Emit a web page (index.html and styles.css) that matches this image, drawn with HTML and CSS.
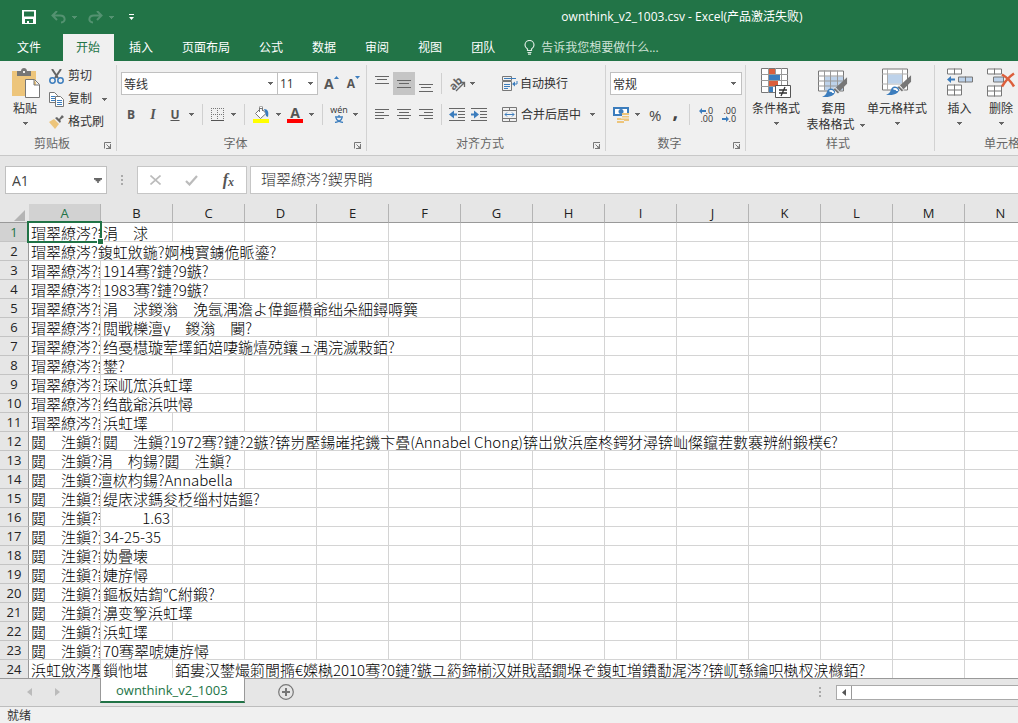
FILE: index.html
```html
<!DOCTYPE html>
<html lang="zh-CN">
<head>
<meta charset="utf-8">
<title>ownthink_v2_1003.csv - Excel</title>
<link rel="stylesheet" href="styles.css">
</head>
<body>
<svg class="defs" aria-hidden="true">
  <symbol id="caret" viewBox="0 0 5 3"><path d="M0 0h5v1h-1v1h-1v1h-1v-1h-1v-1h-1z" fill="currentColor"/></symbol>
  <symbol id="launch" viewBox="0 0 8 8"><path d="M.5 6.500V.5H7M2.500 2.500l3 3" fill="none" stroke="#777"/><path d="M7 3v4H3z" fill="#777"/><path d="M6 2h1v5H2v-1h4z" fill="#777"/></symbol>
  <symbol id="brush" viewBox="0 0 28 22"><path d="M27 0v7l-8 8-4-4z" fill="#777"/><path d="M14 11l5 5-2 2-5-5z" fill="#777" stroke="#f0f0f0"/><path d="M0 21c4-1 5-4 6-7 2-3 7-2 8 1 0 4-4 7-14 6z" fill="#3c7dbd"/><path d="M8 15c2-1 4 0 4 2" stroke="#fff" stroke-width="2" fill="none"/></symbol>
</svg>

<header class="titlebar">
  <div class="quick">
    <button class="plain" aria-label="保存"><svg width="14" height="14" viewBox="0 0 14 14"><path fill="#fff" fill-rule="evenodd" d="M0 0h14v14H0zM2 1.500v5h10v-5zM3 9v4h2v-2h2v2h4V9z"/></svg></button>
    <button class="plain dim undo" aria-label="撤消"><svg width="15" height="13" viewBox="0 0 15 13" fill="none" stroke="currentColor" stroke-width="2"><path d="M6 0L1.500 4.500 6 9M2 4.500h7c6 0 6 7 1 7"/></svg><svg class="caret"><use href="#caret"/></svg></button>
    <button class="plain dim redo" aria-label="恢复"><svg width="15" height="13" viewBox="0 0 15 13" fill="none" stroke="currentColor" stroke-width="2"><path d="M9 0l4.500 4.500L9 9M13 4.500H6c-6 0-6 7-1 7"/></svg><svg class="caret"><use href="#caret"/></svg></button>
    <button class="plain more" aria-label="自定义快速访问工具栏"><svg width="5" height="6" viewBox="0 0 5 6"><path fill="#fff" d="M0 0h5v1H0zM0 3h5L2.500 6z"/></svg></button>
  </div>
  <h1 class="title">ownthink_v2_1003.csv - Excel(产品激活失败)</h1>
</header>

<nav class="tabs">
  <button class="tab file">文件</button>
  <button class="tab active">开始</button>
  <button class="tab">插入</button>
  <button class="tab">页面布局</button>
  <button class="tab">公式</button>
  <button class="tab">数据</button>
  <button class="tab">审阅</button>
  <button class="tab">视图</button>
  <button class="tab">团队</button>
  <button class="tell"><svg width="11" height="15" viewBox="0 0 11 15" fill="none" stroke="#dcebe2" stroke-width="1.200"><path d="M3.500 10.500V9C2 8 1 6.700 1 5a4.500 4.500 0 0 1 9 0c0 1.700-1 3-2.500 4v1.500zM3.500 12.500h4M4 14.200h3"/></svg>告诉我您想要做什么...</button>
</nav>

<section class="ribbon">
  <div class="group clip">
    <div class="body">
      <button class="big paste"><svg width="29" height="31" viewBox="0 0 29 31"><path fill="#edc57b" d="M1 3h24v25H1z"/><path fill="#777" d="M6 3h4c0-4 6-4 6 0h4v5H6z"/><path fill="#f0f0f0" d="M12 3h2v2h-2z"/><path d="M14.500 11.500h9l5 5v13h-14zM23 12v5h5" fill="#fff" stroke="#777"/></svg><span>粘贴</span><svg class="caret"><use href="#caret"/></svg></button>
      <div class="stack">
        <button class="small"><svg width="15" height="15" viewBox="0 0 15 15"><path d="M3 0l6 9M12 0L6 9" stroke="#666" stroke-width="2"/><circle cx="3.500" cy="11.500" r="2.700" fill="none" stroke="#3c7dbd" stroke-width="1.500"/><circle cx="11.500" cy="11.500" r="2.700" fill="none" stroke="#3c7dbd" stroke-width="1.500"/></svg>剪切</button>
        <button class="small"><svg width="15" height="15" viewBox="0 0 15 15"><path d="M.5.5h5l3 3v7h-8z" fill="#fff" stroke="#777"/><path d="M2 4.500h4M2 6.500h4M2 8.500h4" stroke="#3c7dbd"/><path d="M6.500 4.500h5l3 3v7h-8z" fill="#fff" stroke="#777"/><path d="M8 8.500h5M8 10.500h5M8 12.500h5" stroke="#3c7dbd"/></svg>复制<svg class="caret far"><use href="#caret"/></svg></button>
        <button class="small"><svg width="15" height="15" viewBox="0 0 15 15"><path d="M0 7l5-3 5 5-4 5z" fill="#edc57b"/><path d="M6 3l5 5 1-2-1-1 4-3-2-2-3 4-2-2z" fill="#666"/></svg>格式刷</button>
      </div>
    </div>
    <div class="caption"><span>剪贴板</span><svg class="launch"><use href="#launch"/></svg></div>
  </div>

  <div class="group font">
    <div class="body rows">
      <div class="row">
        <div class="combo name"><input aria-label="字体" value="等线"><svg class="caret"><use href="#caret"/></svg></div>
        <div class="combo size"><input aria-label="字号" value="11"><svg class="caret"><use href="#caret"/></svg></div>
        <button class="plain grow" aria-label="增大字号"><b>A</b><svg width="5" height="3" viewBox="0 0 5 3"><path d="M0 3h5L2.500 0z" fill="#3c7dbd"/></svg></button>
        <button class="plain shrink" aria-label="减小字号"><b>A</b><svg width="5" height="3" viewBox="0 0 5 3"><path d="M0 0h5L2.500 3z" fill="#3c7dbd"/></svg></button>
      </div>
      <div class="row second">
        <button class="plain letter"><b>B</b></button>
        <button class="plain letter"><b class="serif"><i>I</i></b></button>
        <button class="plain letter"><b><u>U</u></b></button>
        <svg class="caret"><use href="#caret"/></svg>
        <span class="sep"></span>
        <button class="plain" aria-label="边框"><svg width="14" height="14" viewBox="0 0 14 14"><path d="M.5 0v12M6.500 0v12M12.500 0v12M0 .5h13M0 6.500h13" stroke="#777" stroke-dasharray="1 1"/><path d="M0 12.500h13" stroke="#555"/></svg></button>
        <svg class="caret"><use href="#caret"/></svg>
        <span class="sep"></span>
        <button class="plain" aria-label="填充颜色"><svg width="17" height="17" viewBox="0 0 17 17"><path d="M2.500 7.500L8 2l5 5.500-5.500 5zM6.500 6V1.500c0-2 3-2 3 0V5" fill="#fff" stroke="#777"/><path d="M11 3c4 0 5 3 4 8l-2-1-.5-3z" fill="#3c7dbd"/><path fill="#ff0" d="M0 13h16v4H0z"/></svg></button>
        <svg class="caret"><use href="#caret"/></svg>
        <button class="plain color" aria-label="字体颜色"><b>A</b></button>
        <svg class="caret"><use href="#caret"/></svg>
        <span class="sep"></span>
        <button class="plain pinyin" aria-label="拼音"><span>wén</span><svg width="10" height="8" viewBox="0 0 10 8" fill="none" stroke="#3c7dbd" stroke-width="1.300"><path d="M1 2h8M5 0v2M2 3c1 3 4 4 7 4.500M8 3c-1 3-4 4-7 4.500"/></svg></button>
        <svg class="caret"><use href="#caret"/></svg>
      </div>
    </div>
    <div class="caption"><span>字体</span><svg class="launch"><use href="#launch"/></svg></div>
  </div>

  <div class="group align">
    <div class="body rows">
      <div class="row">
        <button class="cell top" aria-label="顶端对齐"><svg width="14" height="8" viewBox="0 0 14 8" stroke="#666"><path d="M0 .5h14M2 3.500h10M0 7.500h14"/></svg></button>
        <button class="cell pressed" aria-label="垂直居中"><svg width="14" height="8" viewBox="0 0 14 8" stroke="#666"><path d="M0 .5h14M2 3.500h10M0 7.500h14"/></svg></button>
        <button class="cell bottom" aria-label="底端对齐"><svg width="14" height="8" viewBox="0 0 14 8" stroke="#666"><path d="M0 .5h14M2 3.500h10M0 7.500h14"/></svg></button>
        <span class="sep"></span>
        <button class="plain" aria-label="方向"><svg width="17" height="16" viewBox="0 0 17 16"><text x="0" y="12" transform="rotate(-45 6 8)" class="ab">ab</text><path d="M7 15l8-8M11 6.500h4.500V11" fill="none" stroke="#666" stroke-width="1.300"/></svg></button>
        <svg class="caret"><use href="#caret"/></svg>
        <button class="small wrap"><svg width="16" height="16" viewBox="0 0 16 16" fill="none" stroke="#777"><path d="M.5.5h9v4h-9zM.5 5.500h9v9h-9z"/><path d="M2 2.500h12M2 8.500h6M2 10.500h6M2 12.500h4M15 5v3h-4" stroke="#3c7dbd"/><path d="M13 5.500L10 8l3 2.500z" fill="#3c7dbd" stroke="none"/></svg>自动换行</button>
      </div>
      <div class="row second">
        <button class="cell" aria-label="左对齐"><svg width="14" height="11" viewBox="0 0 14 11" stroke="#666"><path d="M0 .5h14M0 3.500h9M0 6.500h14M0 9.500h9"/></svg></button>
        <button class="cell" aria-label="居中"><svg width="14" height="11" viewBox="0 0 14 11" stroke="#666"><path d="M0 .5h14M2 3.500h10M0 6.500h14M2 9.500h10"/></svg></button>
        <button class="cell" aria-label="右对齐"><svg width="14" height="11" viewBox="0 0 14 11" stroke="#666"><path d="M0 .5h14M5 3.500h9M0 6.500h14M5 9.500h9"/></svg></button>
        <span class="sep"></span>
        <button class="cell" aria-label="减少缩进量"><svg width="16" height="13" viewBox="0 0 16 13" stroke="#666"><path d="M0 .5h16M9 3.500h7M9 6.500h7M9 9.500h7M0 12.500h16"/><path d="M5 2.500L0 6.500l5 4v-3h3v-2H5z" fill="#3c7dbd" stroke="none"/></svg></button>
        <button class="cell" aria-label="增加缩进量"><svg width="16" height="13" viewBox="0 0 16 13" stroke="#666"><path d="M0 .5h16M9 3.500h7M9 6.500h7M9 9.500h7M0 12.500h16"/><path d="M3 2.500l5 4-5 4v-3H0v-2h3z" fill="#3c7dbd" stroke="none"/></svg></button>
        <button class="small merge"><svg width="15" height="15" viewBox="0 0 15 15" fill="none" stroke="#777"><path d="M.5.5h14v14H.5zM0 3.500h15M0 11.500h15M7.500 0v3M7.500 12v3"/><path d="M3 7.500h9M5 5.500l-2 2 2 2M10 5.500l2 2-2 2" stroke="#3c7dbd"/></svg>合并后居中</button>
        <svg class="caret apart"><use href="#caret"/></svg>
      </div>
    </div>
    <div class="caption"><span>对齐方式</span><svg class="launch"><use href="#launch"/></svg></div>
  </div>

  <div class="group number">
    <div class="body rows">
      <div class="row">
        <div class="combo format"><input aria-label="数字格式" value="常规"><svg class="caret"><use href="#caret"/></svg></div>
      </div>
      <div class="row second">
        <button class="plain" aria-label="会计数字格式"><svg width="16" height="16" viewBox="0 0 16 16"><path d="M0 0h16v9H0z" fill="#3c7dbd"/><path d="M2 2h12v5H2z" fill="#fff"/><circle cx="8" cy="4.500" r="2.500" fill="#3c7dbd"/><path d="M9 6h7v8H9zM4 11h7v5H4z" fill="#edc57b"/><path d="M9 8.500h7M8 11h8M4 13.500h7" stroke="#f0f0f0"/></svg></button>
        <svg class="caret"><use href="#caret"/></svg>
        <button class="plain pct">%</button>
        <button class="plain comma">,</button>
        <span class="sep"></span>
        <button class="plain dec" aria-label="增加小数位数"><span><svg width="7" height="6" viewBox="0 0 7 6"><path d="M3 0L0 3l3 3V4h4V2H3z" fill="#3c7dbd"/></svg>.0</span><span>.00</span></button>
        <button class="plain dec" aria-label="减少小数位数"><span>.00</span><span><svg width="7" height="6" viewBox="0 0 7 6"><path d="M4 0l3 3-3 3V4H0V2h4z" fill="#3c7dbd"/></svg>.0</span></button>
      </div>
    </div>
    <div class="caption"><span>数字</span><svg class="launch"><use href="#launch"/></svg></div>
  </div>

  <div class="group styles">
    <div class="body">
      <button class="big"><svg width="31" height="31" viewBox="0 0 31 31"><path d="M.5.5h26v24H.5z" fill="#fff" stroke="#777"/><path d="M7.500 0v25M14.500 0v25M20.500 0v25M0 6.500h27M0 12.500h27M0 18.500h27" stroke="#999"/><path d="M8 1h6v5H8zM8 13h9v5H8z" fill="#dc5f3c"/><path d="M8 7h11v5H8zM8 19h4v5H8z" fill="#3c7dbd"/><path d="M14.500 17.500h15v12h-15z" fill="#fff" stroke="#555"/><path d="M18 22h8M18 25h8M24 19l-4 9" stroke="#333" stroke-width="1.300"/></svg><span>条件格式</span><svg class="caret"><use href="#caret"/></svg></button>
      <button class="big two"><svg width="31" height="30" viewBox="0 0 31 30"><path d="M.5 2.500h25v20H.5z" fill="#fff"/><path d="M7 8h18v14H7z" fill="#bdd2ea"/><path d="M.5 2.500h25v20H.5z" fill="none" stroke="#777"/><path d="M6.500 2v20M12.500 2v20M19.500 2v20M0 7.500h26M0 12.500h26M0 17.500h26" stroke="#999"/><use href="#brush" x="4" y="8" width="26" height="22"/></svg><span>套用</span><span>表格格式<svg class="caret"><use href="#caret"/></svg></span></button>
      <button class="big"><svg width="31" height="30" viewBox="0 0 31 30"><path d="M.5.5h25v21H.5z" fill="#fff" stroke="#777"/><path d="M5.500 0v22M20.500 0v22M0 5.500h26M0 15.500h26" stroke="#aaa"/><path d="M6 6h14v9H6z" fill="#bdd2ea"/><use href="#brush" x="4" y="6" width="26" height="22"/></svg><span>单元格样式</span><svg class="caret"><use href="#caret"/></svg></button>
    </div>
    <div class="caption"><span>样式</span></div>
  </div>

  <div class="group cells">
    <div class="body">
      <button class="big"><svg width="27" height="30" viewBox="0 0 27 30"><path d="M1.500.5h14v5h-14zM8.500 0v6M1.500 16.500h14v10h-14zM8.500 16v11M1 21.500h15" fill="#fff" stroke="#777"/><path d="M12.500 8.500h14v5h-14zM19.500 8v6" fill="#bdd2ea" stroke="#777"/><path d="M5 7.500L1 11l4 3.500V12h4v-2H5z" fill="#3c7dbd"/></svg><span>插入</span><svg class="caret"><use href="#caret"/></svg></button>
      <button class="big"><svg width="30" height="30" viewBox="0 0 30 30"><path d="M1.500.5h14v5h-14zM8.500 0v6M1.500 17.500h14v10h-14zM8.500 17v11M1 22.500h15" fill="#fff" stroke="#777"/><path d="M7.500 8.500h10v5h-10z" fill="#bdd2ea" stroke="#777"/><path d="M16 6c5 3 9 7 12 12M28 5c-6 4-9 8-12 13" stroke="#dc5f3c" stroke-width="2.500" fill="none"/></svg><span>删除</span><svg class="caret"><use href="#caret"/></svg></button>
    </div>
    <div class="caption"><span>单元格</span></div>
  </div>
</section>

<section class="formula">
  <div class="combo ref"><input aria-label="名称框" value="A1"><svg class="caret"><use href="#caret"/></svg></div>
  <span class="grip"></span>
  <div class="fx">
    <button class="plain" aria-label="取消"><svg width="11" height="10" viewBox="0 0 11 10" stroke="#bbb" stroke-width="1.600"><path d="M.5.5l10 9M10.500.5l-10 9"/></svg></button>
    <button class="plain" aria-label="输入"><svg width="13" height="11" viewBox="0 0 13 11" fill="none" stroke="#bbb" stroke-width="2.200"><path d="M1 6l3.500 3.500L12 1"/></svg></button>
    <button class="plain func"><i>f</i><small>x</small></button>
  </div>
  <input class="entry" aria-label="编辑栏" value="瑁翠繚涔?鍥界睄">
</section>

<main class="sheet">
  <table>
    <colgroup id="cols"></colgroup>
    <thead><tr id="head"></tr></thead>
    <tbody id="rows"></tbody>
  </table>
</main>

<footer>
  <div class="sheetbar">
    <div class="arrows"><button class="plain" aria-label="上一个"><svg width="5" height="8" viewBox="0 0 5 8"><path d="M5 0v8L0 4z" fill="#bbb"/></svg></button><button class="plain" aria-label="下一个"><svg width="5" height="8" viewBox="0 0 5 8"><path d="M0 0v8l5-4z" fill="#bbb"/></svg></button></div>
    <button class="sheettab">ownthink_v2_1003</button>
    <button class="plain add" aria-label="新工作表"><svg width="16" height="16" viewBox="0 0 16 16" fill="none" stroke="#777"><circle cx="8" cy="8" r="7.300" stroke-width="1.200"/><path d="M4 8h8M8 4v8" stroke-width="2"/></svg></button>
    <span class="grip"></span>
    <div class="scroll"><button aria-label="向左滚动"><svg width="4" height="7" viewBox="0 0 4 7"><path d="M4 0v7L0 3.500z" fill="#555"/></svg></button></div>
  </div>
  <div class="status">就绪</div>
</footer>
<script src="app.js"></script>
</body>
</html>
```

FILE: styles.css
```css
* { box-sizing: border-box; }
body {
  margin: 0;
  height: 100vh;
  display: flex;
  flex-direction: column;
  overflow: hidden;
  background: #e6e6e6;
  color: #333;
  font: 12px/16px "Open Sans", "Noto Sans CJK SC", sans-serif;
}
button, input { font: inherit; color: inherit; border: 0; padding: 0; background: none; margin: 0; }
button { display: flex; align-items: center; justify-content: center; white-space: nowrap; }
svg { flex: none; display: block; }
.defs { position: absolute; width: 0; height: 0; }
.caret { width: 5px; height: 3px; color: #666; }

.titlebar { flex: none; height: 34px; background: #227447; color: #fff; display: flex; align-items: center; position: relative; }
.quick { display: flex; align-items: center; height: 30px; padding-left: 22px; }
.dim { color: #549271; gap: 6px; }
.dim .caret { color: inherit; }
.undo { margin-left: 15px; }
.redo { margin-left: 11px; }
.more { margin-left: 15px; }
.title { position: absolute; left: 0; right: 0; text-align: center; margin: 0; padding-left: 346px; font-size: 12px; font-weight: 400; }

.tabs { flex: none; height: 27px; background: #227447; color: #fff; display: flex; }
.tab { padding: 0 15px 0 14px; }
.tab.file { padding: 0 22px 0 17px; }
.tab.active { background: #f0f0f0; color: #227447; padding: 0 14px 0 13px; margin-right: 1px; }
.tell { margin-left: 14px; gap: 6px; color: #cfe2d7; }

.ribbon { flex: none; height: 95px; display: flex; background: #f0f0f0; border-bottom: 1px solid #c8c8c8; overflow: hidden; }
.group { flex: none; display: flex; flex-direction: column; margin: 4px 0 4px; border-right: 1px solid #d2d2d2; color: #333; }
.clip { width: 117px; }
.font { width: 250px; }
.align { width: 239px; }
.number { width: 140px; }
.styles { width: 189px; }
.cells { width: 138px; border: 0; }
.body { flex: 1; display: flex; align-items: flex-start; padding-top: 3px; }
.body.rows { flex-direction: column; padding-top: 7px; gap: 8px; }
.row { display: flex; align-items: center; height: 23px; }
.caption { display: flex; justify-content: center; align-items: center; height: 14px; color: #666; padding-right: 4px; }
.caption span { flex: 1; text-align: center; }
.launch { width: 8px; height: 8px; margin-top: 4px; }
.big { flex-direction: column; justify-content: flex-start; }
.big > svg:first-child { margin-bottom: 2px; height: 31px; }
.big span { line-height: 16px; }
.big > .caret { margin-top: 5px; }
.paste { width: 30px; margin-left: 10px; }
.stack { display: flex; flex-direction: column; gap: 7px; margin-left: 9px; }
.small { gap: 4px; justify-content: flex-start; height: 16px; }
.far { margin-left: 6px; }
.combo { display: flex; align-items: center; background: #fff; border: 1px solid #c0c0c0; height: 23px; padding: 0 4px 0 2px; }
.combo input { flex: 1; min-width: 0; outline: 0; height: 20px; }
.combo.name { width: 157px; margin-left: 4px; }
.combo.size { width: 41px; margin-left: -1px; }
.combo.format { width: 132px; margin-left: 4px; padding-right: 5px; }
.grow, .shrink { align-items: flex-start; color: #555; }
.grow { margin-left: 6px; font-size: 14px; }
.shrink { margin-left: 8px; font-size: 12px; }
.letter { width: 22px; font-size: 12px; color: #555; }
.serif { font-family: "Liberation Serif", serif; font-size: 14px; }
.font .second { padding-left: 3px; }
.font .second .caret { margin-left: 6px; }
.font .second .letter + .caret { margin-left: 3px; }
.sep { width: 1px; height: 21px; background: #d0d0d0; margin: 0 8px; flex: none; }
.color { margin-left: 6px; width: 16px; height: 17px; border-bottom: 4px solid #f00; font-size: 14px; line-height: 13px; color: #555; }
.pinyin { flex-direction: column; line-height: 8px; font-size: 9px; gap: 1px; width: 16px; }
.cell { width: 22px; height: 23px; }
.align .row { padding-left: 4px; }
.top { padding-bottom: 8px; }
.bottom { padding-top: 9px; }
.pressed { background: #c5c5c5; }
.align .sep { margin: 0 4px; }
.align .plain { margin-left: 3px; }
.align .row .caret { margin-left: 4px; }
.align .row .apart { margin-left: 9px; }
.ab { font: bold 11px "Open Sans", sans-serif; fill: #666; }
.wrap { margin-left: 27px; gap: 2px; }
.merge { margin-left: 12px; }
.number .second { padding-left: 7px; }
.number .second .caret { margin-left: 6px; }
.pct { margin-left: 9px; font-size: 15px; color: #444; }
.comma { margin-left: 11px; font-size: 20px; font-weight: 700; color: #444; height: 23px; padding-bottom: 8px; }
.dec { flex-direction: column; align-items: flex-end; width: 16px; margin-right: 7px; line-height: 8px; font-size: 9px; }
.dec span { display: flex; align-items: center; }
.number .sep { margin: 0 7px 0 11px; }
.styles .body { padding-left: 6px; gap: 5px; }
.two span { display: flex; align-items: center; gap: 5px; }
.two span:nth-of-type(2) { margin-left: 4px; }
.styles .two { width: 57px; }
.cells .body { padding-left: 11px; gap: 13px; }

.formula { flex: none; display: flex; align-items: stretch; height: 28px; margin: 10px 0 10px 5px; }
.combo.ref { width: 102px; height: auto; padding: 0 4px 0 6px; font-size: 14px; color: #444; }
.ref .caret { width: 8px; height: 5px; }
.grip { width: 2px; height: 11px; align-self: center; background: repeating-linear-gradient(#aaa 0 2px, transparent 2px 4px); }
.formula .grip { margin: 0 14px; }
.fx { width: 110px; background: #fff; border: 1px solid #c6c6c6; display: flex; justify-content: space-between; padding: 0 12px; margin-right: 3px; }
.func { font: italic 700 16px "Liberation Serif", serif; color: #555; }
.func small { font-size: 12px; padding-top: 4px; }
.entry { flex: 1; min-width: 0; background: #fff; border: 1px solid #c6c6c6; border-right: 0; padding: 0 0 4px 10px; font: 15px "Noto Sans CJK SC", sans-serif; font-weight: 300; color: #333; outline: 0; }

.sheet { flex: 1; min-height: 0; overflow: hidden; background: #fff; border-bottom: 1px solid #999; }
table { table-layout: fixed; border-collapse: separate; border-spacing: 0; width: 1037px; }
.c0 { width: 29px; }
.c1 { width: 72px; }
th { font-weight: 400; background: #e6e6e6; color: #222; font-size: 13px; line-height: 18px; padding: 0; height: 19px; border-right: 1px solid #b4b4b4; border-bottom: 1px solid #c4c4c4; }
thead th { border-bottom-color: #999; }
thead th.corner { border-right-color: transparent; }
.corner svg { margin: 4px 0 0 14px; }
th.on { background: #d2d2d2; color: #227447; }
tbody th { border-right-color: #999; }
td { height: 19px; padding: 0 0 0 2px; border-right: 1px solid #d4d4d4; border-bottom: 1px solid #d4d4d4; color: #000; font: 15px/20px "Noto Sans CJK SC", "Noto Sans CJK JP", sans-serif; font-weight: 300; white-space: nowrap; }
.text { display: block; height: 18px; overflow: hidden; }
.num { text-align: right; padding-right: 2px; }
.selected { position: relative; }
.selected::before { content: ""; position: absolute; inset: -2px; border: 2px solid #217346; }
.selected::after { content: ""; position: absolute; right: -3px; bottom: -3px; width: 5px; height: 5px; background: #217346; outline: 1px solid #fff; }

footer { flex: none; }
.sheetbar { display: flex; height: 28px; align-items: flex-start; border-bottom: 1px solid #bdbdbd; }
.arrows { display: flex; width: 100px; height: 25px; padding-left: 27px; gap: 23px; }
.sheettab { height: 25px; margin-top: -1px; background: #fff; border: 1px solid #999; border-top: 0; border-bottom: 2px solid #217346; color: #227447; font-size: 13px; padding: 0 16px 0 15px; position: relative; }
.add { margin: 5px auto 0 33px; }
.sheetbar .grip { align-self: flex-start; margin: 8px 15px 0 0; }
.scroll { width: 182px; height: 15px; margin-top: 6px; background: #fff; border: 1px solid #aaa; border-right: 0; }
.scroll button { width: 15px; height: 13px; border-right: 1px solid #999; }
.status { height: 16px; line-height: 17px; background: #f0f0f0; padding-left: 7px; }
```

FILE: app.js
```js
// Each entry is a row; a cell is [text, columns spanned].
const a = '瑁翠繚涔?', b = '閮　泩鎭?';
const data = [
  [[a + '鍥界睄', 1], ['涓　浗', 1]],
  [[a + '鍑虹敓鍦?婀栧寳鐪佹眽鎏?', 4]],
  [[a + '鍑虹敓', 1], ['1914骞?鏈?9鏃?', 2]],
  [[a + '鍑虹敓', 1], ['1983骞?鏈?9鏃?', 2]],
  [[a + '鑱屼笟', 1], ['涓　浗鍐滃　浼氬湡澹よ偉鏂欑爺绌朵細鐞嗕簨', 5]],
  [[a + '姣曚笟', 1], ['閲戦櫟澶у　鍐滃　闄?', 3]],
  [[a + '浠ｈ〃', 1], ['绉戞櫘璇荤墿銆婄啛鍦熺殑鑲ュ湡浣滅敤銆?', 5]],
  [[a + '鎬у埆', 1], ['鐢?', 1]],
  [[a + '鏍囩', 1], ['琛屼笟浜虹墿', 2]],
  [[a + '鏍囩', 1], ['绉戠爺浜哄憳', 2]],
  [[a + '鏍囩', 1], ['浜虹墿', 1]],
  [[b + '鎻忚堪', 1], [b + '1972骞?鏈?2鏃?锛岃壓鍚嶉挓鐖卞疂(Annabel Chong)锛岀敓浜庢柊鍔犲潯锛屾儏鑹茬數褰辨紨鍛樸€?', 11]],
  [[b + '涓　枃鍚?' + b, 3]],
  [[b + '澶栨枃鍚?Annabella', 3]],
  [[b + '鍑虹敓', 1], ['缇庡浗鎷夋柉缁村姞鏂?', 3]],
  [[b + '韬珮', 1], ['1.63', 1]],
  [[b + '涓夊洿', 1], ['34-25-35', 1]],
  [[b + '鐪肩潧', 1], ['妫曡壊', 1]],
  [[b + '鑱屼笟', 1], ['婕斿憳', 1]],
  [[b + '鑱屼笟', 1], ['鏂板姞鍧℃紨鍛?', 2]],
  [[b + '鏍囩', 1], ['濞变箰浜虹墿', 2]],
  [[b + '鏍囩', 1], ['浜虹墿', 1]],
  [[b + '鏍囩', 1], ['70骞翠唬婕斿憳', 2]],
  [['浜虹敓涔嬮亾', 1], ['鎻忚堪', 1], ['銆婁汉鐢熶箣閬撱€嬫槸2010骞?0鏈?鏃ユ箹鍗椾汉姘戝嚭鐗堢ぞ鍑虹増鐨勫浘涔?锛屼綔鑰呮槸杈涙櫞銆?', 10]]
];
const letters = 'ABCDEFGHIJKLMN';
const cols = document.getElementById('cols');
const head = document.getElementById('head');
const rows = document.getElementById('rows');

function add(parent, tag, cls, text) {
  const el = document.createElement(tag);
  if (cls) el.className = cls;
  if (text) el.textContent = text;
  parent.appendChild(el);
  return el;
}

add(cols, 'col', 'c0');
add(head, 'th', 'corner').innerHTML = '<svg width="11" height="11" viewBox="0 0 11 11"><path d="M11 0v11H0z" fill="#b4b4b4"/></svg>';
for (const l of letters) {
  add(cols, 'col', 'c1');
  add(head, 'th', l === 'A' ? 'on' : '', l);
}
data.forEach((cells, i) => {
  const tr = add(rows, 'tr');
  add(tr, 'th', i === 0 ? 'on' : '', String(i + 1));
  let used = 0;
  cells.forEach(([text, span], j) => {
    const td = add(tr, 'td', i === 0 && j === 0 ? 'selected' : text === '1.63' ? 'num' : '');
    td.colSpan = span;
    add(td, 'span', 'text', text);
    used += span;
  });
  for (; used < letters.length; used++) add(tr, 'td');
});
```
